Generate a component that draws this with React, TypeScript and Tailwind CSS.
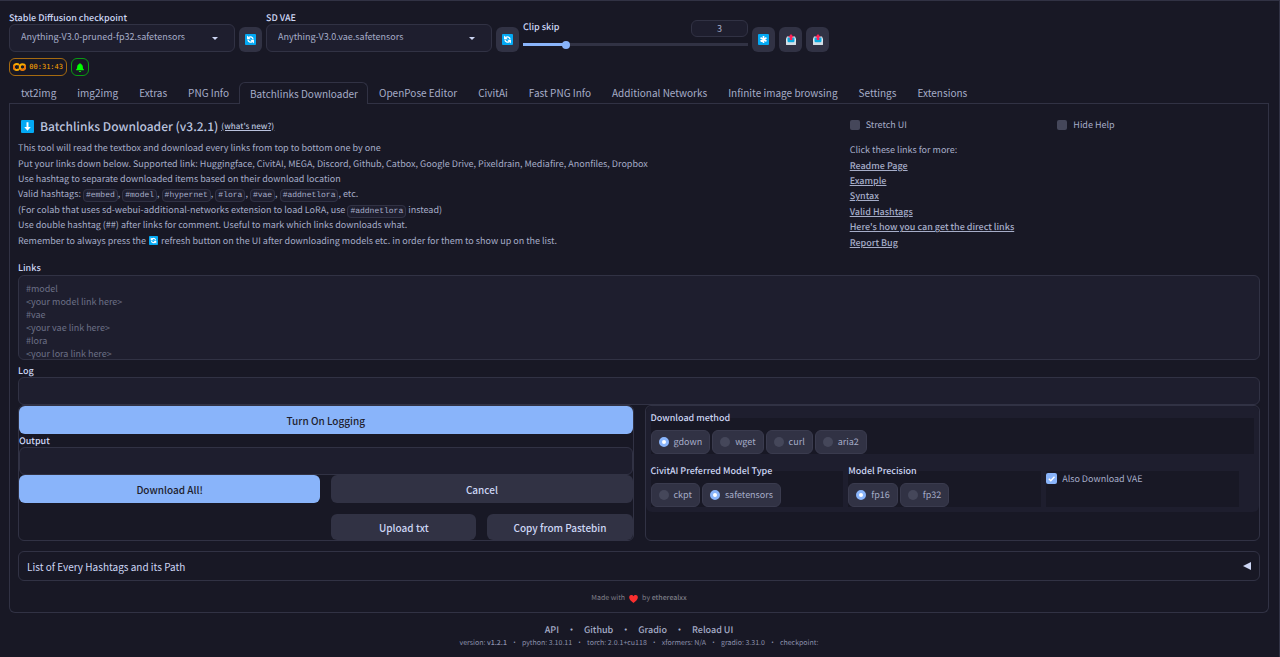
import type { ReactNode } from "react";

function Tile({ className, children }: { className: string; children: ReactNode }) {
  return (
    <svg viewBox="0 0 24 24" className={className} aria-hidden="true">
      <rect width="24" height="24" rx="2" fill="#03a9f4" />
      {children}
    </svg>
  );
}

function RefreshTile({ className }: { className: string }) {
  return (
    <Tile className={className}>
      <g fill="none" stroke="#fff" strokeWidth="3">
        <path d="M8 7.500c4-2.500 9-1 9.500 4" />
        <path d="M16 16.500c-4 2.500-9 1-9.500-4" />
      </g>
      <path d="M4.500 3.500v8h8z M19.500 20.500v-8h-8z" fill="#fff" />
    </Tile>
  );
}

function StarTile({ className }: { className: string }) {
  return (
    <Tile className={className}>
      <path d="M12 4.500v15M5.500 8.200l13 7.600M18.500 8.200l-13 7.600" stroke="#fff" strokeWidth="3.600" />
    </Tile>
  );
}

function DownTile({ className }: { className: string }) {
  return (
    <Tile className={className}>
      <path d="M10.200 4h3.600v9h4.200L12 20l-6-7h4.200z" fill="#fff" />
    </Tile>
  );
}

function Outbox() {
  return (
    <svg viewBox="0 0 20 22" className="h-[11px] w-[10px]" aria-hidden="true">
      <path d="M2 5h16l2 5v10a2 2 0 0 1-2 2H2a2 2 0 0 1-2-2V10z" fill="#e1e8ed" />
      <path d="M3 7h14v10H3z" fill="#0baadf" />
      <path d="M0 15h3l2 2h10l2-2h3v5a2 2 0 0 1-2 2H2a2 2 0 0 1-2-2z" fill="#d3dde4" />
      <path d="M10 0l5.500 6.500h-3V12h-5V6.500h-3z" fill="#ff2257" />
    </svg>
  );
}

function ToolButton({ label, children }: { label: string; children: ReactNode }) {
  return (
    <button
      type="button"
      aria-label={label}
      className="mt-[26px] flex h-[25px] w-[23px] shrink-0 items-center justify-center rounded-md bg-[#313244]"
    >
      {children}
    </button>
  );
}

function Dropdown({ id, label, value }: { id: string; label: string; value: string }) {
  return (
    <div className="w-[226px] pt-[10px]">
      <label htmlFor={id} className="block text-[9px] leading-[13px] font-medium text-[#cdd6f4]">
        {label}
      </label>
      <div className="relative">
        <select
          id={id}
          className="block h-7 w-full appearance-none rounded-md border border-[#313244] bg-[#1e1e2e] px-[11px] pb-[2px] text-[9px] text-[#a6adc8]"
        >
          <option>{value}</option>
        </select>
        <svg viewBox="0 0 6 3" className="pointer-events-none absolute top-[13px] right-[17px] h-[3px] w-[6px]">
          <path d="M0 0h6L3 3z" fill="#cdd6f4" />
        </svg>
      </div>
    </div>
  );
}

function Radio({ name, label, checked = false }: { name: string; label: string; checked?: boolean }) {
  return (
    <label className="flex h-6 items-center gap-[5px] rounded-md border border-[#3a3b4e] bg-[#313244] px-[7px] text-[9px] text-[#a6adc8]">
      <input
        type="radio"
        name={name}
        defaultChecked={checked}
        className="size-[10px] appearance-none rounded-full bg-[#45475a] checked:border-[3px] checked:border-[#89b4fa] checked:bg-white"
      />
      {label}
    </label>
  );
}

function Check({ label }: { label: string }) {
  return (
    <label className="flex h-4 flex-1 items-center gap-[6px] text-[9px] text-[#a6adc8]">
      <input type="checkbox" className="size-[10px] appearance-none rounded-[2px] bg-[#45475a]" />
      {label}
    </label>
  );
}

function Code({ children }: { children: string }) {
  return (
    <code className="rounded border border-[#313244] bg-[#1e1e2e] px-[2px] py-px font-['Liberation_Mono',monospace] text-[8px] leading-[8px]">
      {children}
    </code>
  );
}

const tabs = [
  "txt2img",
  "img2img",
  "Extras",
  "PNG Info",
  "Batchlinks Downloader",
  "OpenPose Editor",
  "CivitAi",
  "Fast PNG Info",
  "Additional Networks",
  "Infinite image browsing",
  "Settings",
  "Extensions",
];

const hashtags = ["#embed", "#model", "#hypernet", "#lora", "#vae", "#addnetlora"];

const helpLinks = [
  "Readme Page",
  "Example",
  "Syntax",
  "Valid Hashtags",
  "Here's how you can get the direct links",
  "Report Bug",
];

const versions = ["python: 3.10.11", "torch: 2.0.1+cu118", "xformers: N/A", "gradio: 3.31.0", "checkpoint:"];

const placeholder =
  "#model\n<your model link here>\n#vae\n<your vae link here>\n#lora\n<your lora link here>";

const primary = "h-7 rounded-md bg-[#89b4fa] text-[10px] font-medium text-[#1e1e2e]";
const secondary = "rounded-md bg-[#313244] text-[10px] font-medium text-[#cdd6f4]";
const caption = "block text-[9px] leading-[13px] font-medium text-[#cdd6f4]";

function Header() {
  return (
    <header>
      <div className="flex gap-1">
        <Dropdown id="checkpoint" label="Stable Diffusion checkpoint" value="Anything-V3.0-pruned-fp32.safetensors" />
        <ToolButton label="Refresh checkpoints">
          <RefreshTile className="size-[11px]" />
        </ToolButton>
        <Dropdown id="vae" label="SD VAE" value="Anything-V3.0.vae.safetensors" />
        <ToolButton label="Refresh VAE">
          <RefreshTile className="size-[11px]" />
        </ToolButton>
        <div className="w-[225px] pt-[19px]">
          <div className="flex justify-between">
            <label htmlFor="clip" className={caption}>
              Clip skip
            </label>
            <input
              aria-label="Clip skip value"
              defaultValue="3"
              className="h-[17px] w-[57px] rounded-md border border-[#313244] bg-[#1e1e2e] text-center text-[9px] text-[#a6adc8]"
            />
          </div>
          <input
            id="clip"
            type="range"
            min={1}
            max={12}
            defaultValue={3}
            className="mt-[6px] block h-[3px] w-full appearance-none bg-[linear-gradient(to_right,#89b4fa_19%,#313244_19%)] [&::-webkit-slider-thumb]:size-2 [&::-webkit-slider-thumb]:appearance-none [&::-webkit-slider-thumb]:rounded-full [&::-webkit-slider-thumb]:bg-[#89b4fa]"
          />
        </div>
        <ToolButton label="Random">
          <StarTile className="size-[11px]" />
        </ToolButton>
        <ToolButton label="Unload checkpoint">
          <Outbox />
        </ToolButton>
        <ToolButton label="Unload VAE">
          <Outbox />
        </ToolButton>
      </div>
      <div className="mt-[6px] flex gap-1">
        <div className="flex h-[18px] w-[58px] items-center justify-between rounded-md border border-[#a56a10] px-[3px]">
          <svg viewBox="0 0 26 16" className="h-2 w-[13px]" aria-hidden="true">
            <g fill="none" strokeWidth="4">
              <path d="M12 4A6 6 0 1 0 12 12" stroke="#f9ab00" />
              <circle cx="19" cy="8" r="5.500" stroke="#f9ab00" />
              <path d="M15 12A5.500 5.500 0 0 0 23 4.500" stroke="#e8710a" />
              <path d="M3 4.500A6 6 0 0 0 4 12.500" stroke="#e8710a" />
            </g>
          </svg>
          <span className="font-['DejaVu_Sans_Mono',monospace] text-[7px] text-[#ffa500]">00:31:43</span>
        </div>
        <button
          type="button"
          aria-label="Notifications"
          className="flex h-[18px] w-[18px] items-center justify-center rounded-md border border-[#0a9a12]"
        >
          <svg viewBox="0 0 448 512" className="h-[9px] w-2" fill="#00ff00" aria-hidden="true">
            <path d="M224 512c35 0 64-29 64-64H160c0 35 29 64 64 64zm215-150c-19-21-55-52-55-154 0-78-54-140-128-155V32a32 32 0 1 0-64 0v21C118 68 64 130 64 208c0 102-36 133-55 154-6 6-9 14-9 22 0 16 13 32 32 32h384c19 0 32-16 32-32 0-8-3-16-9-22z" />
          </svg>
        </button>
      </div>
    </header>
  );
}

function Intro() {
  return (
    <section className="flex h-[151px] gap-[11px] text-[9px] text-[#a6adc8]">
      <div className="min-w-0 flex-[2]">
        <h1 className="flex h-8 items-center pt-[13px] pl-[3px] text-[12px] font-medium text-[#bac2de]">
          <DownTile className="mr-[6px] size-[13px]" />
          Batchlinks Downloader (v3.2.1)
          <a href="#new" className="ml-[3px] text-[8px] underline">
            (what's new?)
          </a>
        </h1>
        <div className="mt-1 grid h-[108px] auto-rows-fr items-center leading-[15px]">
          <p>This tool will read the textbox and download every links from top to bottom one by one</p>
          <p>
            Put your links down below. Supported link: Huggingface, CivitAI, MEGA, Discord, Github, Catbox, Google
            Drive, Pixeldrain, Mediafire, Anonfiles, Dropbox
          </p>
          <p>Use hashtag to separate downloaded items based on their download location</p>
          <p>
            Valid hashtags:{" "}
            {hashtags.map((tag) => (
              <span key={tag}>
                <Code>{tag}</Code>
                {", "}
              </span>
            ))}
            etc.
          </p>
          <p>
            (For colab that uses sd-webui-additional-networks extension to load LoRA, use <Code>#addnetlora</Code>{" "}
            instead)
          </p>
          <p>Use double hashtag (##) after links for comment. Useful to mark which links downloads what.</p>
          <p>
            Remember to always press the <RefreshTile className="mx-px inline-block size-[9px] align-[-1px]" /> refresh
            button on the UI after downloading models etc. in order for them to show up on the list.
          </p>
        </div>
      </div>
      <div className="min-w-0 flex-1 pt-[13px]">
        <div className="flex gap-[5px]">
          <Check label="Stretch UI" />
          <Check label="Hide Help" />
        </div>
        <div className="mt-[9px] grid h-[108px] auto-rows-fr items-center leading-[15px]">
          <p>Click these links for more:</p>
          {helpLinks.map((link) => (
            <p key={link}>
              <a href="#help" className="font-medium underline">
                {link}
              </a>
            </p>
          ))}
        </div>
      </div>
    </section>
  );
}

function Actions() {
  return (
    <section className="min-w-0 flex-1 rounded-md border border-[#313244]">
      <button type="button" className={`${primary} block w-full`}>
        Turn On Logging
      </button>
      <label htmlFor="output" className={caption}>
        Output
      </label>
      <input id="output" className="block h-7 w-full rounded-md border border-[#313244] bg-[#1e1e2e] px-2 text-[9px]" />
      <div className="grid grid-cols-2 gap-[11px]">
        <button type="button" className={primary}>
          Download All!
        </button>
        <button type="button" className={secondary}>
          Cancel
        </button>
        <div className="col-start-2 grid h-[26px] grid-cols-2 gap-[11px]">
          <button type="button" className={secondary}>
            Upload txt
          </button>
          <button type="button" className={secondary}>
            Copy from Pastebin
          </button>
        </div>
      </div>
    </section>
  );
}

function Options() {
  return (
    <section className="min-w-0 flex-1 rounded-md border border-[#313244]">
      <div className="rounded-md bg-[#1e1e2e] p-[5px]">
        <fieldset className="bg-[#181825]">
          <legend className={caption}>Download method</legend>
          <div className="flex gap-[2px] pt-[6px]">
            <Radio name="method" label="gdown" checked />
            <Radio name="method" label="wget" />
            <Radio name="method" label="curl" />
            <Radio name="method" label="aria2" />
          </div>
        </fieldset>
        <div className="mt-[10px] grid grid-cols-3 gap-[5px] pr-[15px]">
          <fieldset className="min-w-0 bg-[#181825]">
            <legend className={caption}>CivitAI Preferred Model Type</legend>
            <div className="flex gap-[2px] pt-[6px]">
              <Radio name="type" label="ckpt" />
              <Radio name="type" label="safetensors" checked />
            </div>
          </fieldset>
          <fieldset className="min-w-0 bg-[#181825]">
            <legend className={caption}>Model Precision</legend>
            <div className="flex gap-[2px] pt-[6px]">
              <Radio name="precision" label="fp16" checked />
              <Radio name="precision" label="fp32" />
            </div>
          </fieldset>
          <div className="mt-[7px] bg-[#181825]">
            <label className="flex h-[15px] items-center gap-[5px] text-[9px] text-[#a6adc8]">
              <span className="relative flex size-[11px]">
                <input
                  type="checkbox"
                  defaultChecked
                  className="size-[11px] appearance-none rounded-[2px] bg-[#45475a] checked:bg-[#89b4fa]"
                />
                <svg viewBox="0 0 11 11" className="pointer-events-none absolute inset-0 size-[11px]">
                  <path d="M2.800 5.800l2 2L8.500 3.700" fill="none" stroke="#fff" strokeWidth="1.400" />
                </svg>
              </span>
              Also Download VAE
            </label>
          </div>
        </div>
      </div>
    </section>
  );
}

export default function App() {
  return (
    <div className="min-h-screen border-t border-r border-[#313244] bg-[#181825] pr-[10px] pl-[9px] font-['Noto_Sans_CJK_SC',sans-serif] text-[#cdd6f4] [text-rendering:geometricPrecision]">
      <Header />
      <main>
        <nav className="mt-[6px] flex text-[10px] text-[#a6adc8]">
          <div className="w-px border-b border-[#313244]" />
          {tabs.map((tab) => (
            <button
              key={tab}
              type="button"
              className={
                tab === "Batchlinks Downloader"
                  ? "h-[22px] rounded-t-md border border-b-0 border-[#313244] pr-[9px] pl-[10px] whitespace-nowrap"
                  : "h-[22px] border-b border-[#313244] pr-[10px] pl-[11px] whitespace-nowrap"
              }
            >
              {tab}
            </button>
          ))}
          <div className="flex-1 border-b border-[#313244]" />
        </nav>
        <div className="rounded-b-md border border-t-0 border-[#313244] px-2">
          <Intro />
          <div className="pt-[6px]">
            <label htmlFor="links" className={caption}>
              Links
            </label>
            <textarea
              id="links"
              placeholder={placeholder}
              className="mt-px block h-[85px] w-full resize-none overflow-hidden rounded-md border border-[#313244] bg-[#1e1e2e] px-[7px] pt-[6px] text-[9px] leading-[13px] placeholder:text-[#6c7086]"
            />
            <label htmlFor="log" className={`${caption} mt-1`}>
              Log
            </label>
            <input
              id="log"
              className="block h-7 w-full rounded-md border border-[#313244] bg-[#1e1e2e] px-2 text-[9px]"
            />
          </div>
          <div className="flex gap-[11px]">
            <Actions />
            <Options />
          </div>
          <button
            type="button"
            className="mt-[10px] flex h-[30px] w-full items-center justify-between rounded-md border border-[#313244] px-2 text-[10px]"
          >
            List of Every Hashtags and its Path
            <svg viewBox="0 0 8 8" className="size-2" aria-hidden="true">
              <path d="M0 4l8-4v8z" fill="#cdd6f4" />
            </svg>
          </button>
          <p className="flex h-[31px] items-center justify-center pt-1 text-[7px] text-[#7f7f88]">
            Made with
            <svg viewBox="0 0 24 22" className="mx-1 h-2 w-[9px]" aria-label="love">
              <path d="M12 22C5 17 0 12 0 6.500A6.300 6.300 0 0 1 12 3.500 6.300 6.300 0 0 1 24 6.500C24 12 19 17 12 22z" fill="#f92f2f" />
            </svg>
            by&nbsp;<span className="font-medium">etherealxx</span>
          </p>
        </div>
      </main>
      <footer className="pt-[10px]">
        <div className="flex justify-center gap-[8px] text-[9px] leading-[14px] font-medium text-[#a6adc8]">
          <a href="#api">API</a>
          <span>•</span>
          <a href="#github">Github</a>
          <span>•</span>
          <a href="#gradio">Gradio</a>
          <span>•</span>
          <a href="#reload">Reload UI</a>
        </div>
        <div className="flex justify-center gap-1 text-[7px] leading-[12px] text-[#8b90ab]">
          <span>
            version: <a href="#version" className="font-medium">v1.2.1</a>
          </span>
          {versions.map((version) => (
            <span key={version} className="flex gap-1">
              <span>•</span>
              {version}
            </span>
          ))}
        </div>
      </footer>
    </div>
  );
}
